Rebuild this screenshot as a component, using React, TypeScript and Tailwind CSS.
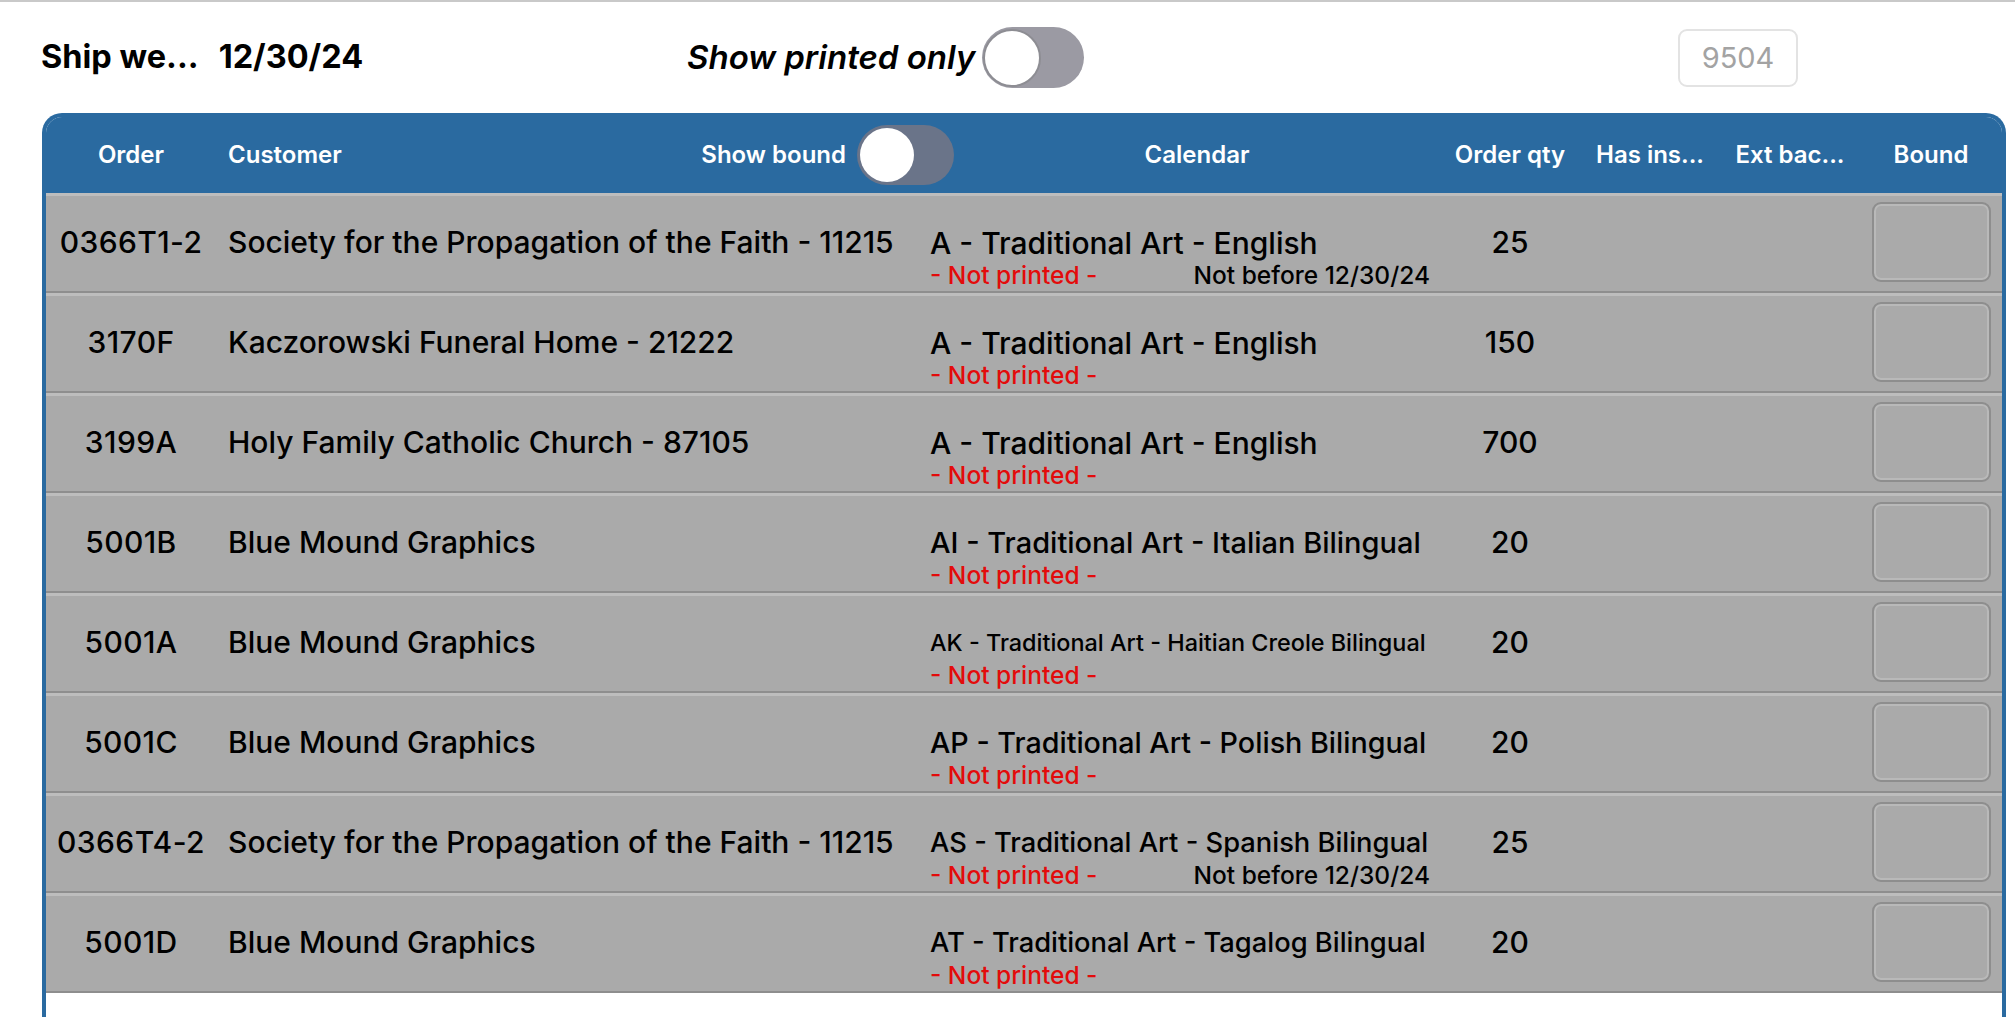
import { useState } from "react";

type Row = {
  order: string;
  customer: string;
  calendar: string;
  calSize: string;
  notBefore?: string;
  qty: number;
};

const ROWS: Row[] = [
  {
    order: "0366T1-2",
    customer: "Society for the Propagation of the Faith - 11215",
    calendar: "A - Traditional Art - English",
    calSize: "text-[30px]",
    notBefore: "12/30/24",
    qty: 25,
  },
  {
    order: "3170F",
    customer: "Kaczorowski Funeral Home - 21222",
    calendar: "A - Traditional Art - English",
    calSize: "text-[30px]",
    qty: 150,
  },
  {
    order: "3199A",
    customer: "Holy Family Catholic Church - 87105",
    calendar: "A - Traditional Art - English",
    calSize: "text-[30px]",
    qty: 700,
  },
  {
    order: "5001B",
    customer: "Blue Mound Graphics",
    calendar: "AI - Traditional Art - Italian Bilingual",
    calSize: "text-[29px]",
    qty: 20,
  },
  {
    order: "5001A",
    customer: "Blue Mound Graphics",
    calendar: "AK - Traditional Art - Haitian Creole Bilingual",
    calSize: "text-[23.4px]",
    qty: 20,
  },
  {
    order: "5001C",
    customer: "Blue Mound Graphics",
    calendar: "AP - Traditional Art - Polish Bilingual",
    calSize: "text-[28.7px]",
    qty: 20,
  },
  {
    order: "0366T4-2",
    customer: "Society for the Propagation of the Faith - 11215",
    calendar: "AS - Traditional Art - Spanish Bilingual",
    calSize: "text-[27.3px]",
    notBefore: "12/30/24",
    qty: 25,
  },
  {
    order: "5001D",
    customer: "Blue Mound Graphics",
    calendar: "AT - Traditional Art - Tagalog Bilingual",
    calSize: "text-[27.3px]",
    qty: 20,
  },
];

function Toggle({
  on,
  onChange,
  dark,
}: {
  on: boolean;
  onChange: (v: boolean) => void;
  dark?: boolean;
}) {
  return (
    <button
      aria-pressed={on}
      onClick={() => onChange(!on)}
      className={`flex shrink-0 items-center rounded-full ${
        dark ? "h-[60px] w-[97px] bg-[#6a7489] p-[3px]" : "h-[61px] w-[102px] bg-[#9b9aa3] p-[1px]"
      } ${on ? "justify-end" : "justify-start"}`}
    >
      <span
        className={`block rounded-full bg-white ${
          dark ? "h-[54px] w-[54px]" : "h-[58px] w-[58px] border-2 border-[#8d8d93]"
        }`}
      />
    </button>
  );
}

export default function App() {
  const [printedOnly, setPrintedOnly] = useState(false);
  const [showBound, setShowBound] = useState(false);
  const [bound, setBound] = useState<Record<string, boolean>>({});

  return (
    <div className="h-[1017px] overflow-hidden bg-white font-['Inter','Liberation_Sans',sans-serif] text-black">
      <div className="flex h-[113px] items-center border-t-2 border-[#c9c9c9] pl-[41px]">
        <div className="flex w-[646px] items-center text-[32.5px] font-bold">
          <span>Ship we...</span>
          <span className="ml-[20px]">12/30/24</span>
        </div>
        <div className="flex w-[397px] items-center">
          <span className="text-[33px] font-semibold italic">Show printed only</span>
          <span className="ml-auto">
            <Toggle on={printedOnly} onChange={setPrintedOnly} />
          </span>
        </div>
        <input
          readOnly
          value="9504"
          className="ml-[594px] h-[58px] w-[120px] rounded-[9px] border-2 border-[#e3e3e3] text-center text-[29px] text-[#a3a3a3] outline-none"
        />
      </div>

      <div className="ml-[42px] h-[920px] w-[1964px] rounded-t-[20px] border-x-4 border-t-4 border-[#2a6aa0] bg-white">
        <div className="grid h-[76px] grid-cols-[170px_738px_486px_140px_140px_140px_142px] items-center rounded-t-[16px] bg-[#2a6aa0] text-[24px] font-semibold text-white">
          <span className="text-center">Order</span>
          <div className="flex items-center pl-3">
            <span>Customer</span>
            <span className="ml-auto mr-[11px]">Show bound</span>
            <Toggle on={showBound} onChange={setShowBound} dark />
          </div>
          <span className="text-center">Calendar</span>
          <span className="text-center">Order qty</span>
          <span className="text-center">Has ins...</span>
          <span className="text-center">Ext bac...</span>
          <span className="text-center">Bound</span>
        </div>

        {ROWS.map((r) => (
          <div
            key={r.order}
            className="grid h-[100px] grid-cols-[170px_702px_522px_140px_140px_140px_142px] border-b-2 border-[#8e8e8e] bg-[#aaaaaa] text-[30px] font-medium shadow-[inset_0_3px_0_#bdbdbd]"
          >
            <span className="self-center text-center tracking-[0.4px]">{r.order}</span>
            <span className="self-center whitespace-nowrap pl-3">{r.customer}</span>
            <div className="flex flex-col pl-3 pr-[10px] pt-[33px]">
              <span className={`flex h-[34px] items-center whitespace-nowrap ${r.calSize}`}>
                {r.calendar}
              </span>
              <div className="mt-[2px] flex items-center text-[24.5px] leading-[26px]">
                <span className="text-[#e30b0b]">- Not printed -</span>
                {r.notBefore && <span className="ml-auto">Not before {r.notBefore}</span>}
              </div>
            </div>
            <span className="self-center text-center">{r.qty}</span>
            <span />
            <span />
            <div className="flex items-center justify-center">
              <button
                aria-label={`Bound ${r.order}`}
                aria-pressed={!!bound[r.order]}
                onClick={() => setBound((b) => ({ ...b, [r.order]: !b[r.order] }))}
                className="h-[80px] w-[119px] rounded-[9px] border-2 border-[#8e8e8e] shadow-[inset_0_0_0_2px_#b9b9b9]"
              />
            </div>
          </div>
        ))}
      </div>
    </div>
  );
}
